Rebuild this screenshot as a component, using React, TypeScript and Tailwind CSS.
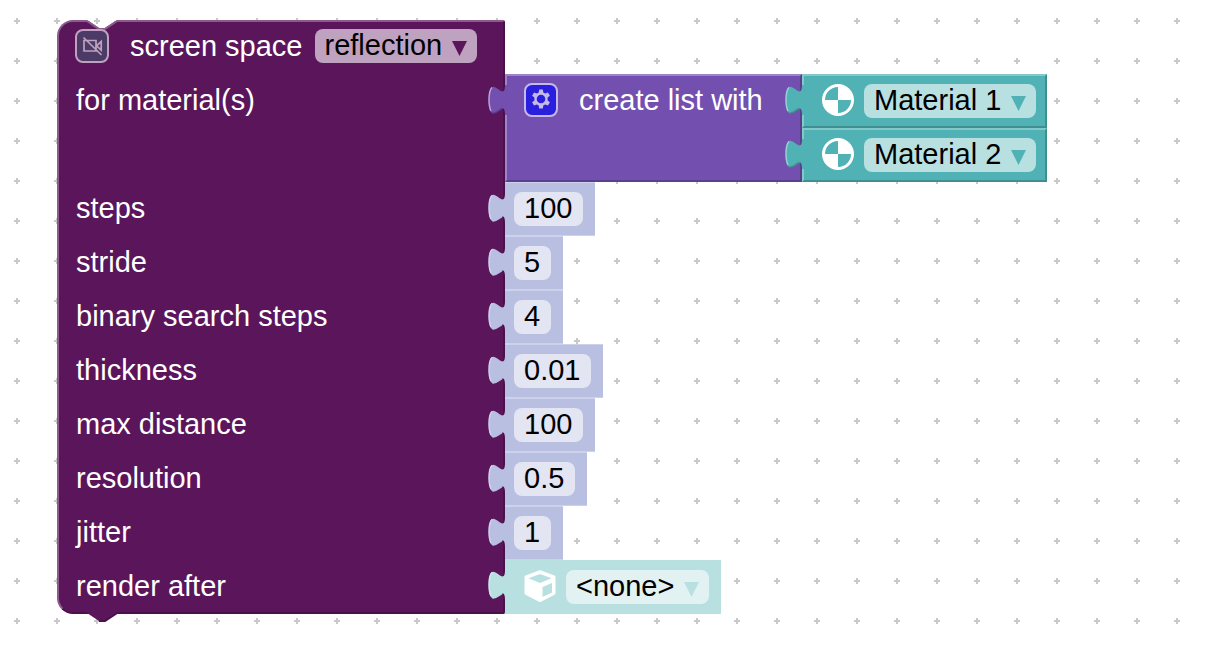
import { useState } from "react";

type TabProps = {
  fill: string;
  light: string;
  dark: string;
  place?: string;
};

// Puzzle tab that plugs a value block into the block on its left
const Tab = ({ fill, light, dark, place = "-left-[17px] top-[9px]" }: TabProps) => (
  <svg className={`absolute h-[32px] w-5 ${place}`} viewBox="0 -1 20 32" aria-hidden="true">
    <path d="M20 0H17C17 20 1 -16 1 15S17 10 17 30H20Z" className={fill} />
    <path d="M3 26C1.500 23 1 19 1 15S1.500 5 4 2.500" fill="none" strokeWidth="1.500" className={light} />
    <path d="M4.500 28C8 28.500 11 25 14 23.500" fill="none" strokeWidth="1.500" className={dark} />
  </svg>
);

const Gear = () => (
  <svg className="h-[22px] w-[22px]" viewBox="0 0 22 22" aria-hidden="true">
    <path
      fill="#c5b9e7"
      fillRule="evenodd"
      d="M9.200 .5h3.600l.5 2.900 1.900 1.100 2.800-1 1.900 3.200-2.300 1.900v2.800l2.300 1.900-1.900 3.200-2.800-1-1.900 1.100-.5 2.900H9.200l-.5-2.900-1.900-1.100-2.800 1-1.900-3.200 2.300-1.900V8.600L2.100 6.700 4 3.500l2.800 1 1.900-1.100zM11 5.700a4.300 4.300 0 1 0 0 8.600 4.300 4.300 0 0 0 0-8.600z"
    />
  </svg>
);

const CameraOff = () => (
  <svg className="h-6 w-6 shrink-0" viewBox="0 0 24 24" fill="none" stroke="#bfa2bf" strokeWidth="1.700" aria-hidden="true">
    <path d="M4 6.500h12v10.500H4zM16.500 11.800l4.700-4.300v8.600zM3.500 3.500l18 17.500" />
  </svg>
);

const Cube = () => (
  <svg className="h-8 w-8" viewBox="0 0 32 32" aria-hidden="true">
    <path
      fill="white"
      fillRule="evenodd"
      d="M15 .5q1-.5 2 0l13.500 5q1 .5 1 1.500v16q0 1-1 1.700l-13.500 7q-1 .5-2 0l-13.500-7q-1-.7-1-1.700V7q0-1 1-1.500zM16 4 4.500 8.300 16 13 27.500 8.300zM18.500 17v10l9.500-4.500v-9.500z"
    />
  </svg>
);

const MaterialBall = () => (
  <svg className="h-8 w-8" viewBox="0 0 32 32" aria-hidden="true">
    <circle cx="16" cy="16" r="14.500" fill="none" stroke="white" strokeWidth="3" />
    <path fill="white" d="M16 1a15 15 0 0 1 15 15H16zM16 31A15 15 0 0 1 1 16h15z" />
  </svg>
);

type DropdownProps = {
  label: string;
  options: string[];
  className: string;
  arrow: string;
};

const Dropdown = ({ label, options, className, arrow }: DropdownProps) => (
  <div className={`relative h-[34px] shrink-0 rounded-lg ${className}`}>
    <select
      aria-label={label}
      className="block h-8 w-full appearance-none rounded-lg bg-transparent pl-[10px] pr-6 leading-none text-black outline-none"
    >
      {options.map((option) => (
        <option key={option}>{option}</option>
      ))}
    </select>
    <svg className="pointer-events-none absolute right-[10px] top-3 h-[15px] w-[15px]" viewBox="0 0 15 15" aria-hidden="true">
      <path d="M0 0h15L7.500 15z" className={arrow} />
    </svg>
  </div>
);

const params = [
  { id: "steps", label: "steps", value: "100", width: "w-[69px]" },
  { id: "stride", label: "stride", value: "5", width: "w-[37px]" },
  { id: "binary", label: "binary search steps", value: "4", width: "w-[37px]" },
  { id: "thickness", label: "thickness", value: "0.01", width: "w-[77px]" },
  { id: "distance", label: "max distance", value: "100", width: "w-[69px]" },
  { id: "resolution", label: "resolution", value: "0.5", width: "w-[61px]" },
  { id: "jitter", label: "jitter", value: "1", width: "w-[37px]" },
];

const rowLabel = "col-start-1 h-[54px] pl-[19px] pt-[9px] leading-[34px]";

const NumberRow = ({ id, label, value, width }: (typeof params)[number]) => {
  const [current, setCurrent] = useState(value);

  return (
    <>
      <label htmlFor={id} className={rowLabel}>{label}</label>
      <div className="relative col-start-2 h-[54px] w-fit border-y border-[#cdd2ea] bg-[#b8bfe0] pl-[9px] pr-3 pt-[9px]">
        <Tab fill="fill-[#b8bfe0]" light="stroke-[#cdd2ea]" dark="stroke-[#b8bfe0]" />
        <input
          id={id}
          value={current}
          onChange={(e) => setCurrent(e.target.value)}
          className={`block h-[34px] rounded-lg bg-[#e3e5f3] px-[10px] text-black outline-none ${width}`}
        />
      </div>
    </>
  );
};

const MaterialBlock = ({ index }: { index: number }) => (
  <div className="relative flex h-[54px] gap-[10px] border-2 border-b-[#3f8e90] border-l-[#84c9ca] border-r-[#3f8e90] border-t-[#84c9ca] bg-[#50b2b4] pl-[18px] pr-[9px] pt-2">
    <Tab fill="fill-[#50b2b4]" light="stroke-[#96d1d2]" dark="stroke-[#3f8e90]" place="-left-[19px] top-2" />
    <MaterialBall />
    <Dropdown
      label={`Material in slot ${index}`}
      options={index === 1 ? ["Material 1", "Material 2"] : ["Material 2", "Material 1"]}
      className="w-[172px] bg-[#b9e0e1]"
      arrow="fill-[#50b2b4]"
    />
  </div>
);

const App = () => {
  return (
    <main className="relative min-h-screen overflow-hidden bg-white font-['Liberation_Sans',Arial,sans-serif] text-[29px] text-white">
      {/* Workspace grid */}
      <svg className="absolute inset-0 h-full w-full" aria-hidden="true">
        <defs>
          <pattern id="grid" width="40" height="40" patternUnits="userSpaceOnUse">
            <path d="M14 21h6M17 18v6" stroke="#c8c8c8" strokeWidth="2" />
          </pattern>
        </defs>
        <rect width="100%" height="100%" fill="url(#grid)" />
      </svg>

      <div className="relative ml-[57px] mt-5 grid w-fit grid-cols-[448px_auto]">
        {/* Statement block body */}
        <div className="relative col-start-1 row-start-1 row-end-4">
          <div className="h-full rounded-l-2xl rounded-r-xs border-2 border-b-[#491149] border-l-[#8c5b8c] border-r-[#491149] border-t-[#8c5b8c] bg-[#5b165b] [clip-path:polygon(0_0,30px_0,42px_8px,48px_8px,60px_0,100%_0,100%_100%,0_100%)]" />
          <svg className="absolute left-[30px] top-0 h-[10px] w-[30px]" viewBox="0 0 30 10" aria-hidden="true">
            <path d="M0 1l12 8h6L30 1" fill="none" stroke="#8c5b8c" strokeWidth="2" />
          </svg>
          <svg className="absolute left-[30px] top-full -mt-0.5 h-[10px] w-[30px]" viewBox="0 0 30 10" aria-hidden="true">
            <path d="M0 0v1l12 8h6L30 1V0z" fill="#5b165b" />
            <path d="M12 9h6l12-8" fill="none" stroke="#491149" strokeWidth="2" />
          </svg>
        </div>

        <div className="relative col-start-1 row-start-1 flex h-[54px] items-start pl-[18px] pt-[9px]">
          <button
            type="button"
            aria-label="Camera off"
            className="mr-[21px] flex h-[34px] w-[34px] items-center justify-center rounded-lg border-2 border-[#bfa2bf] bg-[#4b3b66]"
          >
            <CameraOff />
          </button>
          <span className="mr-3 leading-[34px]">screen space</span>
          <Dropdown label="Effect" options={["reflection"]} className="w-[162px] bg-[#bfa2bf]" arrow="fill-[#5b165b]" />
        </div>

        <div className="relative col-start-1 row-start-2 h-[108px] pl-[19px] pt-[9px] leading-[34px]">for material(s)</div>
        <div className="relative col-start-2 row-start-2 flex h-[108px]">
          <div className="relative flex w-[297px] items-start border-2 border-b-[#5a3f8c] border-l-[#9d84c8] border-r-[#5a3f8c] border-t-[#9d84c8] bg-[#7350b0] pl-[17px] pt-[7px]">
            <Tab fill="fill-[#7350b0]" light="stroke-[#b9a5d9]" dark="stroke-[#5a3f8c]" place="-left-[19px] top-2" />
            <button
              type="button"
              aria-label="Configure list"
              className="mr-[21px] flex h-[34px] w-[34px] items-center justify-center rounded-lg border-2 border-[#c5b9e7] bg-[#2a1fdf]"
            >
              <Gear />
            </button>
            <span className="whitespace-nowrap leading-[34px]">create list with</span>
          </div>
          <div>
            <MaterialBlock index={1} />
            <MaterialBlock index={2} />
          </div>
        </div>

        <div className="relative col-span-2 col-start-1 row-start-3 grid grid-cols-subgrid">
          {params.map((param) => (
            <NumberRow key={param.id} {...param} />
          ))}
          <span className={rowLabel}>render after</span>
          <div className="relative col-start-2 flex h-[54px] w-fit gap-[10px] bg-[#b8e0e0] pl-[19px] pr-3 pt-[10px]">
            <Tab fill="fill-[#b8e0e0]" light="stroke-[#cdeaea]" dark="stroke-[#b8e0e0]" />
            <Cube />
            <Dropdown label="Render after" options={["<none>"]} className="w-[143px] bg-[#e2f2f3]" arrow="fill-[#b8e0e0]" />
          </div>
        </div>
      </div>
    </main>
  );
};

export default App;
